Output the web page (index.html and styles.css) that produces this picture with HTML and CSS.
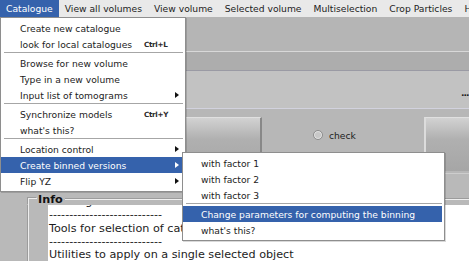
FILE: index.html
```html
<!DOCTYPE html>
<html>
	<head>
		<title>Catalogue</title>
		<link rel="stylesheet" href="styles.css">
	</head>
	<body>
		<div id="window">
			<div class="menubar">
				<span class="open">Catalogue</span>
				<span>View all volumes</span>
				<span>View volume</span>
				<span>Selected volume</span>
				<span>Multiselection</span>
				<span>Crop Particles</span>
				<span>Help</span>
			</div>
			<div class="toolbar"></div>
			<div class="strip"></div>
			<div class="panel"><span class="more">...</span></div>
			<div class="actions">
				<div class="btn left"></div>
				<div class="choice"><span class="radio"></span>check</div>
				<div class="btn right"></div>
			</div>
			<div class="lower">
				<div class="info">
					<div class="info-head"><span>Info</span></div>
					<div class="info-body">
						<div class="log">
							<div class="lines">
								<div>starting on select. To see the options</div>
								<div>----------------------------</div>
								<div>Tools for selection of catalogues</div>
								<div>----------------------------</div>
								<div>Utilities to apply on a single selected object</div>
							</div>
						</div>
					</div>
				</div>
			</div>
		</div>

		<div class="menu catalogue">
			<div class="item"><span>Create new catalogue</span></div>
			<div class="item"><span>look for local catalogues</span><span class="key">Ctrl+L</span></div>
			<div class="sep"></div>
			<div class="item"><span>Browse for new volume</span></div>
			<div class="item"><span>Type in a new volume</span></div>
			<div class="item"><span>Input list of tomograms</span><span></span><span class="arrow"></span></div>
			<div class="sep"></div>
			<div class="item"><span>Synchronize models</span><span class="key">Ctrl+Y</span></div>
			<div class="item"><span>what's this?</span></div>
			<div class="sep"></div>
			<div class="item"><span>Location control</span><span></span><span class="arrow"></span></div>
			<div class="item active"><span>Create binned versions</span><span></span><span class="arrow"></span></div>
			<div class="item"><span>Flip YZ</span><span></span><span class="arrow"></span></div>
		</div>

		<div class="menu binning">
			<div class="item"><span>with factor 1</span></div>
			<div class="item"><span>with factor 2</span></div>
			<div class="item"><span>with factor 3</span></div>
			<div class="sep"></div>
			<div class="item active"><span>Change parameters for computing the binning</span></div>
			<div class="item"><span>what's this?</span></div>
		</div>
	</body>
</html>
```

FILE: styles.css
```css
html, body{
	margin:0;
	padding:0;
	width:469px;
	height:261px;
	overflow:hidden;
	font-family:"DejaVu Sans", sans-serif;
	font-size:9.2px;
	color:#1c1c1c;
}
#window{
	position:relative;
	height:261px;
	background:#b8b8b8;
	overflow:hidden;
}
.menubar{
	display:flex;
	height:17px;
	align-items:center;
	background:#e9e9e9;
	white-space:nowrap;
}
.menubar span{
	height:17px;
	line-height:17px;
	padding:0 6px;
}
.menubar .open{
	background:#3562ac;
	color:#fff;
}
.toolbar{
	height:34px;
	background:#b5b5b5;
}
.strip{
	height:18px;
	background:#adadad;
	border-top:1px solid #d8d8d8;
	border-bottom:1px solid #9a9aa4;
}
.panel{
	height:38px;
	background:#c2c2c2;
	border-bottom:1px solid #d2d2de;
	display:flex;
	align-items:center;
	justify-content:flex-end;
	padding-top:6px;
	box-sizing:border-box;
}
.more{
	width:8px;
	overflow:hidden;
	font-weight:bold;
	letter-spacing:-1px;
}
.actions{
	display:grid;
	grid-template-columns:262px 162px 1fr;
	height:64px;
	padding-top:8px;
	box-sizing:border-box;
	background:#b7b7b7;
}
.btn{
	height:54px;
	background:linear-gradient(#d2d2d2, #b0b0b0 40%, #a6a6a6);
	border-top:1px solid #e0e0e0;
	box-sizing:border-box;
}
.btn.left{
	margin-left:8px;
	border-right:2px solid #888;
}
.btn.right{
	border-left:2px solid #dcdcdc;
}
.choice{
	display:flex;
	align-items:center;
	gap:6px;
	height:20px;
	margin-top:8px;
	padding-left:51px;
	color:#222;
}
.radio{
	width:8px;
	height:8px;
	border-radius:50%;
	border:1px solid #8d8d8d;
	background:#c8c8c8;
	box-shadow:inset 0 0 0 1px #e4e4e4;
}
.lower{
	height:87px;
	border-top:1px solid #cdcdcd;
	background:#b9b9b9;
	box-sizing:border-box;
	padding:19px 0 0 28px;
}
.info-head{
	display:flex;
	height:12px;
	align-items:center;
}
.info-head::before{
	content:"";
	width:8px;
	height:6px;
	align-self:flex-end;
	border-top:1px solid #eeeeee;
	border-left:1px solid #eeeeee;
	box-shadow:-1px -1px 0 #9c9c9c;
}
.info-head span{
	font-size:11.2px;
	font-weight:bold;
	padding:0 2px 0 1px;
	color:#111;
}
.info-head::after{
	content:"";
	flex:1;
	border-top:1px solid #eeeeee;
	box-shadow:0 -1px 0 #9c9c9c;
}
.info-body{
	border-left:1px solid #eeeeee;
	box-shadow:-1px 0 0 #9c9c9c;
	padding-left:19px;
	height:60px;
}
.log{
	height:60px;
	background:#fff;
	overflow:hidden;
	font-size:11.2px;
	line-height:13.3px;
	padding-left:1px;
	white-space:nowrap;
}
.lines{
	margin-top:-10px;
}

.menu{
	position:absolute;
	background:#fff;
	border:1px solid #8e8e8e;
	padding:2px 2px 2px 0;
	box-shadow:1px 1px 0 rgba(0,0,0,.15);
	white-space:nowrap;
}
.catalogue{
	left:0;
	top:17px;
	width:182px;
}
.binning{
	left:182px;
	top:152px;
	width:259px;
}
.item{
	display:grid;
	grid-template-columns:124px 31px 1fr;
	height:16px;
	align-items:center;
	padding-left:19px;
}
.binning .item{
	padding-left:18px;
}
.item.active{
	background:#3562ac;
	color:#fff;
}
.key{
	font-size:7.2px;
	font-weight:bold;
	letter-spacing:-0.3px;
	color:#2a2a2a;
}
.arrow{
	width:0;
	height:0;
	border-top:3.5px solid transparent;
	border-bottom:3.5px solid transparent;
	border-left:4px solid #111;
}
.active .arrow{
	border-left-color:#fff;
}
.sep{
	height:1px;
	margin:0 0 1px 3px;
	border-bottom:1px solid #fff;
	background:#a6a6a6;
}
```
